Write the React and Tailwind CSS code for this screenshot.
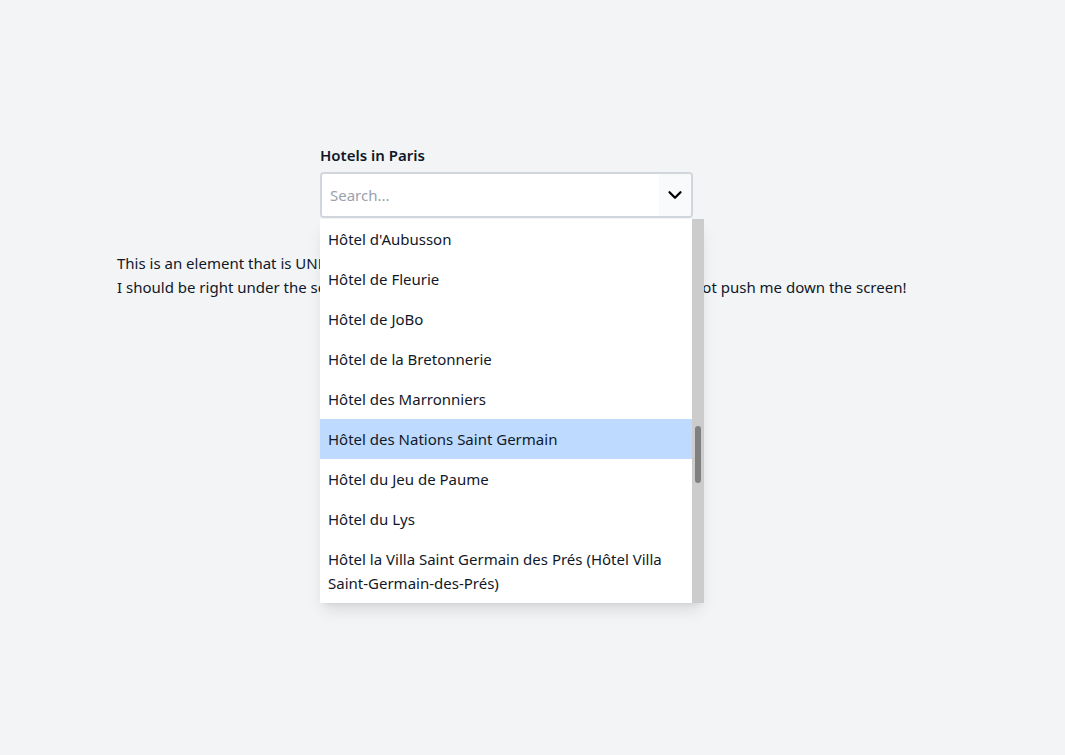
import { ChevronDown } from "lucide-react";

const hotels = [
  "Hôtel d'Aubusson",
  "Hôtel de Fleurie",
  "Hôtel de JoBo",
  "Hôtel de la Bretonnerie",
  "Hôtel des Marronniers",
  "Hôtel des Nations Saint Germain",
  "Hôtel du Jeu de Paume",
  "Hôtel du Lys",
  "Hôtel la Villa Saint Germain des Prés (Hôtel Villa Saint-Germain-des-Prés)",
];

export default function App() {
  const active = "Hôtel des Nations Saint Germain";

  return (
    <div className="min-h-screen bg-gray-100 text-gray-900 font-['Noto_Sans',sans-serif] text-[15px] leading-6">
      <div className="pt-[143px] pl-[117px]">
        <div className="ml-[203px] w-[373px]">
          <label className="block font-semibold mb-[5px]">Hotels in Paris</label>
          <div className="relative">
            <div className="flex h-[46px] rounded border-2 border-gray-300 bg-white overflow-hidden">
              <input
                className="flex-1 min-w-0 px-2 outline-none placeholder:text-gray-400 bg-white"
                placeholder="Search..."
              />
              <button className="w-8 flex items-center justify-center bg-gray-50">
                <ChevronDown size={22} strokeWidth={2.5} className="text-black" />
              </button>
            </div>

            <div className="absolute left-0 top-[47px] w-[384px] h-[384px] flex bg-white shadow-lg z-10">
              <ul className="flex-1 overflow-hidden">
                {hotels.map((h) => (
                  <li
                    key={h}
                    className={`px-2 py-2 ${h === active ? "bg-blue-200" : ""}`}
                  >
                    {h}
                  </li>
                ))}
              </ul>
              <div className="w-3 bg-[#cccccc] pt-[207px]">
                <div className="mx-auto w-[6px] h-[57px] rounded-full bg-[#808080]" />
              </div>
            </div>
          </div>
        </div>

        <div className="mt-[33px]">
          <p>This is an element that is UNDERNEATH the select. It should stay where it is.</p>
          <p>I should be right under the select, and when the dropdown menu opens it should not push me down the screen!</p>
        </div>
      </div>
    </div>
  );
}
